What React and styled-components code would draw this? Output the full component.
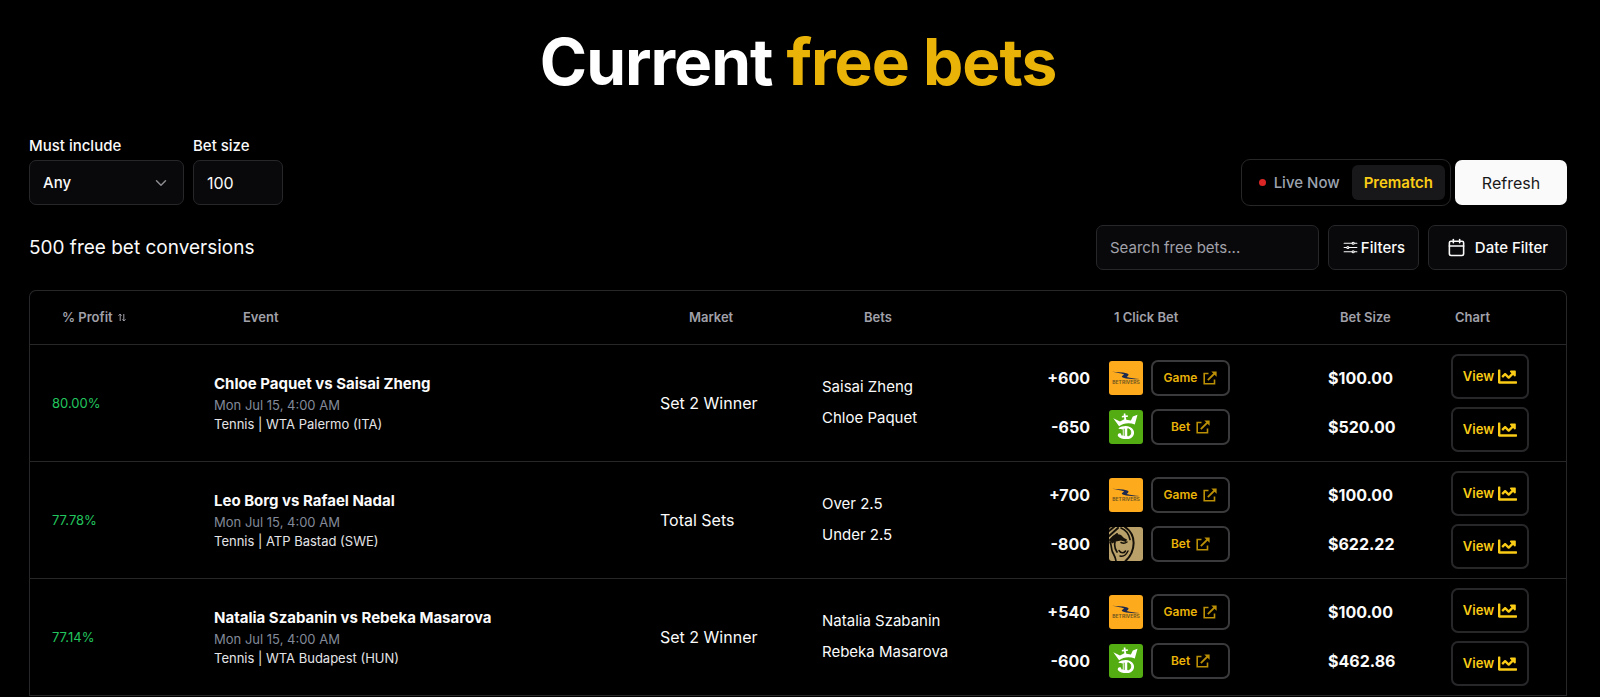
import React from "react";
import styled, { createGlobalStyle } from "styled-components";
import { ChevronDown, Calendar } from "lucide-react";
import { IoOptionsOutline } from "react-icons/io5";
import { FaChartLine } from "react-icons/fa";

const GlobalStyle = createGlobalStyle`
  *, *::before, *::after { box-sizing: border-box; }
  body {
    margin: 0;
    background: #000;
    color: #fafafa;
    font-family: Inter, "Liberation Sans", sans-serif;
    font-size: 15px;
    line-height: 24px;
  }
  button, input, select { font: inherit; color: inherit; }
`;

const Page = styled.main`
  padding: 24px 33px 0 29px;
`;

const Title = styled.h1`
  margin: 0;
  font-size: 64px;
  line-height: 76px;
  font-weight: 700;
  letter-spacing: -1px;
  text-align: center;
  color: #fff;
`;

const Accent = styled.span`
  color: #eab308;
`;

const Bar = styled.div`
  display: flex;
  justify-content: space-between;
  align-items: flex-end;
  margin-top: ${(p) => p.$top}px;
`;

const Group = styled.div`
  display: flex;
  align-items: center;
  gap: ${(p) => p.$gap}px;
`;

const Field = styled.label`
  display: flex;
  flex-direction: column;
  gap: 2px;
  font-weight: 500;
`;

const SelectWrap = styled.span`
  display: grid;
  align-items: center;
  width: 155px;
  > * { grid-area: 1 / 1; }
  > svg { justify-self: end; margin-right: 14px; color: #8b8b90; pointer-events: none; }
`;

const controlBase = `
  height: 45px;
  border: 1px solid #27272a;
  border-radius: 7px;
  background: #09090b;
  outline: none;
`;

const Select = styled.select`
  ${controlBase}
  appearance: none;
  width: 100%;
  padding: 0 13px;
`;

const Input = styled.input`
  ${controlBase}
  width: ${(p) => p.$width}px;
  padding: 0 13px;
  font-weight: 400;
  &::placeholder { color: #a1a1aa; opacity: 1; }
`;

const NumberInput = styled(Input)`
  font-size: 16px;
`;

const Segmented = styled.div`
  display: flex;
  align-items: center;
  height: 47px;
  margin: -1px 0;
  padding: 0 5px;
  border: 1px solid #27272a;
  border-radius: 9px;
`;

const Tab = styled.button`
  display: flex;
  align-items: center;
  gap: 8px;
  height: 35px;
  padding: 0 12px;
  border: 0;
  border-radius: 6px;
  font-weight: ${(p) => (p.$active ? 600 : 500)};
  background: ${(p) => (p.$active ? "#18181b" : "transparent")};
  color: ${(p) => (p.$active ? "#facc15" : "#9ca3af")};
`;

const LiveDot = styled.span`
  width: 7px;
  height: 7px;
  border-radius: 50%;
  background: #dc2626;
`;

const Refresh = styled.button`
  height: 45px;
  width: 112px;
  border: 0;
  border-radius: 7px;
  background: #fafafa;
  color: #18181b;
  font-size: 16px;
`;

const OutlineButton = styled.button`
  ${controlBase}
  display: flex;
  align-items: center;
  justify-content: center;
  gap: ${(p) => p.$gap}px;
  width: ${(p) => p.$width}px;
  padding: 0;
  font-weight: 500;
`;

const Count = styled.h2`
  margin: 0;
  font-size: 19px;
  line-height: 45px;
  font-weight: 400;
`;

const TableFrame = styled.div`
  margin-top: 20px;
  border: 1px solid #27272a;
  border-bottom: 0;
  border-radius: 7px 7px 0 0;
`;

const Table = styled.table`
  width: 100%;
  table-layout: fixed;
  border-collapse: collapse;
`;

const Col = styled.col`
  width: ${(p) => (p.$width ? p.$width + "px" : "auto")};
`;

const HeadCell = styled.th`
  height: 53px;
  padding: 0 0 0 ${(p) => p.$indent}px;
  border-bottom: 1px solid #27272a;
  font-size: 13px;
  font-weight: 600;
  text-align: left;
  color: #a1a1aa;
  > svg { margin-left: 5px; }
`;

const Cell = styled.td`
  height: 117px;
  padding: 0 0 0 16px;
  border-bottom: 1px solid #27272a;
  vertical-align: middle;
`;

const ProfitCell = styled(Cell)`
  padding-left: 22px;
  font-size: 13px;
  color: #22c55e;
`;

const MarketCell = styled(Cell)`
  font-size: 16px;
`;

const ClickCell = styled(Cell)`
  padding-left: 12px;
`;

const EventName = styled.div`
  line-height: 22px;
  font-weight: 700;
`;

const EventMeta = styled.div`
  font-size: 13px;
  line-height: ${(p) => (p.$muted ? 20 : 18)}px;
  color: ${(p) => (p.$muted ? "#828a99" : "#e4e4e7")};
`;

const Stack = styled.div`
  display: flex;
  flex-direction: column;
  align-items: flex-start;
  gap: ${(p) => p.$gap}px;
`;

const BetLine = styled.div`
  display: flex;
  align-items: center;
  gap: 8px;
  height: 36px;
  > svg { flex: none; }
`;

const Odds = styled.span`
  width: 44px;
  margin-right: 11px;
  font-size: 16px;
  text-align: right;
  font-weight: 700;
`;

const BetButton = styled.a`
  display: flex;
  align-items: center;
  justify-content: center;
  gap: 6px;
  width: 79px;
  height: 36px;
  border: 2px solid #3a3a3c;
  border-radius: 7px;
  font-size: 12px;
  font-weight: 600;
  text-decoration: none;
  color: #eab308;
  > svg { opacity: 0.8; }
`;

const Amount = styled.div`
  font-size: 16px;
  line-height: 36px;
  font-weight: 700;
`;

const ViewButton = styled.button`
  display: flex;
  align-items: center;
  justify-content: center;
  gap: 4px;
  width: 78px;
  height: 45px;
  padding: 0;
  border: 2px solid #27272a;
  border-radius: 7px;
  background: transparent;
  font-size: 13px;
  font-weight: 600;
  color: #facc15;
`;

const SortIcon = () => (
  <svg width="8" height="9" viewBox="0 0 8 9" fill="none" stroke="currentColor" aria-hidden="true">
    <path d="M2.2 8V1M.5 2.7 2.2 1 3.5 2.7M5.8 1v7M4.5 6.3 5.8 8 7.5 6.3" />
  </svg>
);

const OpenIcon = () => (
  <svg width="14" height="14" viewBox="0 0 14 14" aria-hidden="true">
    <path d="M5.500 2.500H1.200v10.300h10.300V8.500" fill="none" stroke="currentColor" strokeWidth="1.600" />
    <path d="M4.800 9.200 11.500 2.500" stroke="currentColor" strokeWidth="1.800" />
    <path d="M8.300.4h5.300v5.300z" fill="currentColor" />
  </svg>
);

const BookMark = styled.svg.attrs({ width: 34, height: 34, viewBox: "0 0 34 34", role: "img" })`
  border-radius: 3px;
`;

const LogoText = styled.text`
  font-size: 5px;
  font-weight: 600;
  text-anchor: middle;
  fill: #6b5222;
`;

const BetRivers = () => (
  <BookMark aria-label="BetRivers">
    <rect width="34" height="34" fill="#fdaa1c" />
    <path d="M3 10.800c5 .1 10 .5 14.500 1.500 2 .5 2.700 1.200 1.500 2.400l-1.300 1.400c4 1 8.300 1.700 13 1.900-6 .5-11.500.2-16.200-1.200-2-.6-2.200-1.200-.8-2.200l1.500-1.100C11.500 12.300 7.500 11.500 3 10.800z" fill="#1c2a50" />
    <LogoText x="17" y="23">BETRIVERS</LogoText>
  </BookMark>
);

const DraftKings = () => (
  <BookMark aria-label="DraftKings">
    <rect width="34" height="34" fill="#53ac12" />
    <path d="M4.300 8.200l6.700 3.300 4.300-2.300-.2-2-2.200.3-.1-1.600 2.100-.3-.2-2 1.700-.2.200 2 2.200-.1v1.600l-2 .2.500 2.600 4.600.8 1.900-4 4.700-1.800-2.700 9.800c-5-2.200-11.500-1.600-15.700 1.700z" fill="#fff" />
    <path d="M9.300 18.200c3.500-2.400 8.500-2.800 11.700-1.300 3.200 1.500 4.400 4 4 6.700-.5 3.600-3.300 5.600-7.300 5.500-4 0-7.200-.7-8.700-2.800-.8-1.700.4-3.400 2.200-3 1 .3 1.300 1.200 1 2l1.600.3v-6.200c-1.500-.2-3 .1-4.500-1.200z" fill="#fff" />
    <path d="M15.200 18.700v7.200M18.800 18.700c2.200.5 3 2 2.900 4-.1 1.800-1.100 3-2.900 3.200z" stroke="#53ac12" strokeWidth="1" fill="#53ac12" />
  </BookMark>
);

const BetMgm = () => (
  <BookMark aria-label="BetMGM">
    <rect width="34" height="34" fill="#b9a169" />
    <g fill="none" stroke="#15110a" strokeLinecap="round">
      <path d="M16 0c6 4 8.800 9.500 8.600 16.500-.2 7-3.100 13-8.100 17.500" strokeWidth="2" />
      <path d="M12 1c5 2 8 6.500 9 11.500" strokeWidth="1.600" />
      <path d="M0 4l5-4M0 9l9-8M1 13l7-6" strokeWidth="2" />
      <path d="M1 15c2 4 1 7 2.500 10s3 5 3.500 9M6 15c-1 4 0 7 2 10" strokeWidth="1.700" />
      <path d="M10 23.500c2 3 5 3 6.500.5M12 15.500c2 1 4 1 6-.5M11 29c3 1 6-1 8-5" strokeWidth="1.500" />
    </g>
    <path d="M1 14c1-5 6-8 11-6l3 3 3 1.500-1 2.500-5-1.500-5 1-4 2z" fill="#15110a" />
  </BookMark>
);

const logos = { rivers: BetRivers, kings: DraftKings, mgm: BetMgm };

const columns = [
  { label: "% Profit", width: 168, indent: 32, sortable: true },
  { label: "Event", indent: 45 },
  { label: "Market", width: 162, indent: 45 },
  { label: "Bets", width: 228, indent: 58 },
  { label: "1 Click Bet", width: 278, indent: 80 },
  { label: "Bet Size", width: 123, indent: 28 },
  { label: "Chart", width: 131, indent: 20 },
];

const rows = [
  {
    profit: "80.00%",
    event: "Chloe Paquet vs Saisai Zheng",
    league: "Tennis | WTA Palermo (ITA)",
    market: "Set 2 Winner",
    bets: [
      { pick: "Saisai Zheng", odds: "+600", book: "rivers", action: "Game", size: "$100.00" },
      { pick: "Chloe Paquet", odds: "-650", book: "kings", action: "Bet", size: "$520.00" },
    ],
  },
  {
    profit: "77.78%",
    event: "Leo Borg vs Rafael Nadal",
    league: "Tennis | ATP Bastad (SWE)",
    market: "Total Sets",
    bets: [
      { pick: "Over 2.5", odds: "+700", book: "rivers", action: "Game", size: "$100.00" },
      { pick: "Under 2.5", odds: "-800", book: "mgm", action: "Bet", size: "$622.22" },
    ],
  },
  {
    profit: "77.14%",
    event: "Natalia Szabanin vs Rebeka Masarova",
    league: "Tennis | WTA Budapest (HUN)",
    market: "Set 2 Winner",
    bets: [
      { pick: "Natalia Szabanin", odds: "+540", book: "rivers", action: "Game", size: "$100.00" },
      { pick: "Rebeka Masarova", odds: "-600", book: "kings", action: "Bet", size: "$462.86" },
    ],
  },
];

const BetRow = ({ row }) => (
  <tr>
    <ProfitCell>{row.profit}</ProfitCell>
    <Cell>
      <EventName>{row.event}</EventName>
      <EventMeta $muted>Mon Jul 15, 4:00 AM</EventMeta>
      <EventMeta>{row.league}</EventMeta>
    </Cell>
    <MarketCell>{row.market}</MarketCell>
    <Cell>
      <Stack $gap={7}>
        {row.bets.map((b) => <span key={b.pick}>{b.pick}</span>)}
      </Stack>
    </Cell>
    <ClickCell>
      <Stack $gap={13}>
        {row.bets.map((b) => {
          const Logo = logos[b.book];
          return (
            <BetLine key={b.pick}>
              <Odds>{b.odds}</Odds>
              <Logo />
              <BetButton href="#bet">{b.action} <OpenIcon /></BetButton>
            </BetLine>
          );
        })}
      </Stack>
    </ClickCell>
    <Cell>
      <Stack $gap={13}>
        {row.bets.map((b) => <Amount key={b.pick}>{b.size}</Amount>)}
      </Stack>
    </Cell>
    <Cell>
      <Stack $gap={8}>
        {row.bets.map((b) => (
          <ViewButton key={b.pick} type="button">View <FaChartLine size={19} /></ViewButton>
        ))}
      </Stack>
    </Cell>
  </tr>
);

export default function App() {
  return (
    <Page>
      <GlobalStyle />
      <Title>Current <Accent>free bets</Accent></Title>
      <Bar $top={34}>
        <Group $gap={9}>
          <Field>
            Must include
            <SelectWrap>
              <Select defaultValue="Any"><option>Any</option></Select>
              <ChevronDown size={18} strokeWidth={2} />
            </SelectWrap>
          </Field>
          <Field>
            Bet size
            <NumberInput $width={90} defaultValue="100" />
          </Field>
        </Group>
        <Group $gap={4}>
          <Segmented>
            <Tab type="button"><LiveDot />Live Now</Tab>
            <Tab type="button" $active>Prematch</Tab>
          </Segmented>
          <Refresh type="button">Refresh</Refresh>
        </Group>
      </Bar>
      <Bar $top={20}>
        <Count>500 free bet conversions</Count>
        <Group $gap={9}>
          <Input $width={223} placeholder="Search free bets..." aria-label="Search free bets" />
          <OutlineButton type="button" $width={91} $gap={2}><IoOptionsOutline size={17} />Filters</OutlineButton>
          <OutlineButton type="button" $width={139} $gap={9}><Calendar size={19} />Date Filter</OutlineButton>
        </Group>
      </Bar>
      <TableFrame>
        <Table>
          <colgroup>{columns.map((c) => <Col key={c.label} $width={c.width} />)}</colgroup>
          <thead>
            <tr>
              {columns.map((c) => (
                <HeadCell key={c.label} $indent={c.indent} scope="col">
                  {c.label}
                  {c.sortable && <SortIcon />}
                </HeadCell>
              ))}
            </tr>
          </thead>
          <tbody>{rows.map((r) => <BetRow key={r.event} row={r} />)}</tbody>
        </Table>
      </TableFrame>
    </Page>
  );
}
